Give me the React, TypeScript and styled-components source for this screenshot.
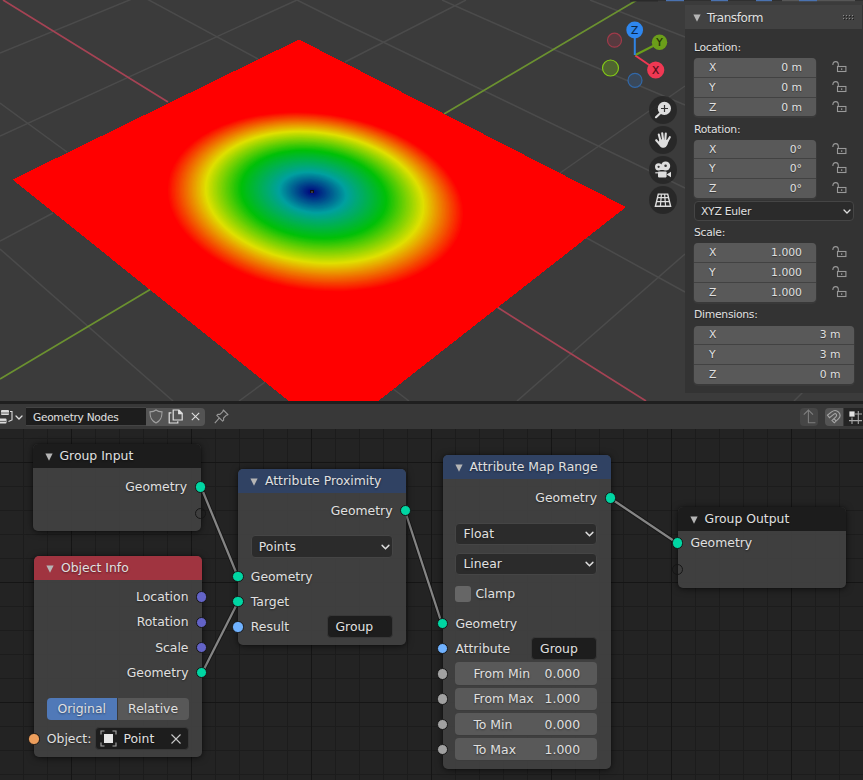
import React from "react";
import styled, { createGlobalStyle } from "styled-components";

const GlobalStyle = createGlobalStyle`
  * { box-sizing: border-box; }
  html, body { margin: 0; padding: 0; background: #232323; overflow: hidden; }
  body { font-family: "DejaVu Sans", sans-serif; color: #e0e0e0; }
  svg { display: block; flex: none; }
`;

const Shell = styled.div`
  width: 863px;
  height: 780px;
  display: flex;
  flex-direction: column;
  overflow: hidden;
  background: #1f1f1f;
`;

/* ---------- 3D viewport ---------- */

const Viewport = styled.section`
  position: relative;
  height: 401px;
  flex: none;
  display: flex;
  justify-content: flex-end;
  overflow: hidden;
  background: #3b3b3b;
`;

const Scene = styled.svg`
  position: absolute;
  left: 0;
  top: 0;
`;

const NavTools = styled.div`
  position: absolute;
  left: 649px;
  top: 95.6px;
  display: flex;
  flex-direction: column;
  gap: 2px;
`;

const NavButton = styled.div`
  width: 28px;
  height: 28.2px;
  border-radius: 50%;
  background: rgba(38, 38, 38, 0.85);
  display: flex;
  align-items: center;
  justify-content: center;
`;

const stops: [number, number[]][] = [
  [0, [0, 0, 124]],
  [0.23, [0, 160, 160]],
  [0.49, [0, 192, 8]],
  [0.735, [224, 224, 0]],
  [1, [255, 0, 0]],
];

function rampColor(t: number) {
  for (let i = 1; i < stops.length; i++) {
    const [t1, b] = stops[i];
    if (t <= t1) {
      const [t0, a] = stops[i - 1];
      const k = (t - t0) / (t1 - t0);
      return `rgb(${a.map((v, j) => Math.round(v + (b[j] - v) * k)).join(",")})`;
    }
  }
  return "rgb(255,0,0)";
}

const RINGS = 110;
const rings = Array.from({ length: RINGS }, (_, i) => 1 - i / RINGS);

const gridLines = [
  "M0 53L132 -1", "M0 136L297 0", "M0 103L67 152", "M147 -1L258 59",
  "M297 0L345 24L383 42L685 188", "M442 0L555 50L685 105", "M590 0L685 37",
  "M466 0L345 62", "M685 86L560 173", "M685 254L517 401", "M585 237L685 292",
  "M0 241L53 213", "M0 249L173 401", "M239 401L265 382", "M392 388L409 401",
  "M794 401L803 392",
];

const sheet = "299,39.5 626,207 377,402 290,402 12.5,179.5";

function SceneDrawing() {
  return (
    <Scene width="863" height="401" viewBox="0 0 863 401">
      <g fill="none" stroke="#4b4b4b" strokeWidth="1.5">
        {gridLines.map((d) => <path key={d} d={d} />)}
      </g>
      <g fill="none" strokeWidth="1.7">
        <path d="M3 0L168 102M497 307L646 401" stroke="#a54354" />
        <path d="M0 379L151 289M444 114L637 0" stroke="#6b9130" />
      </g>
      <polygon points={sheet} fill="#ff0000" shapeRendering="crispEdges" />
      {rings.map((t) => (
        <circle
          key={t}
          r="1"
          fill={rampColor(t)}
          transform={`matrix(${149 * t} ${12.1 * t} 0 ${89.5 * t} ${312 + 3.5 * t} ${192 + 10 * t * t})`}
        />
      ))}
      <rect x="310" y="190" width="4" height="3" fill="#101010" />
      <rect x="311" y="191" width="2" height="2" fill="#3b3b3b" />
      <g>
        <rect x="630" y="0" width="28" height="1.5" fill="#2a2a2a" />
        <rect x="658" y="0" width="205" height="1" fill="#303030" />
        <rect x="666" y="0" width="18" height="1.2" fill="#4a72b0" />
        <rect x="711" y="0" width="17" height="1.2" fill="#4a72b0" />
        <rect x="756" y="0" width="16" height="1.2" fill="#4a72b0" />
        <rect x="782" y="0" width="73" height="1.2" fill="#565656" />
        <rect x="799" y="0" width="18" height="1.2" fill="#4a72b0" />
      </g>
      <g strokeWidth="2" fill="none">
        <path d="M635.3 55.5L655 69" stroke="#ef3752" />
        <path d="M635.3 55L659 43" stroke="#6b9e1a" />
        <path d="M634.8 55V32" stroke="#2f83e3" />
      </g>
      <circle cx="614.5" cy="40.2" r="7" fill="#573a3f" stroke="#a03a4a" strokeWidth="1.2" />
      <circle cx="635" cy="80.3" r="7" fill="#39485a" stroke="#3268a8" strokeWidth="1.2" />
      <circle cx="610.5" cy="68" r="8" fill="#4f6530" stroke="#83c916" strokeWidth="1.2" />
      <circle cx="659.5" cy="42.3" r="7.7" fill="#6b9e1a" />
      <circle cx="634.7" cy="30" r="8.4" fill="#2e87ef" />
      <circle cx="655.7" cy="70" r="8.6" fill="#f03853" />
      <g fontFamily="DejaVu Sans" fontSize="10.5" textAnchor="middle" strokeWidth="0.2">
        <text x="634.7" y="34" fill="#0b2645" stroke="#0b2645">Z</text>
        <text x="659.5" y="46" fill="#1e3005" stroke="#1e3005">Y</text>
        <text x="655.7" y="74" fill="#4b0d17" stroke="#4b0d17">X</text>
      </g>
    </Scene>
  );
}

const ZoomIcon = () => (
  <svg width="18" height="18" viewBox="0 0 18 18">
    <path d="M2 16.2L7 11.5" stroke="#dedede" strokeWidth="2.2" strokeLinecap="round" />
    <circle cx="10.4" cy="7.4" r="6.6" fill="#dedede" />
    <path d="M10.5 4v7M7 7.5h7" stroke="#333" strokeWidth="1.2" />
  </svg>
);

const HandIcon = () => (
  <svg width="18" height="18" viewBox="0 0 18 18">
    <g stroke="#dedede" strokeLinecap="round" strokeWidth="2.1" fill="none">
      <path d="M6.3 9L4.8 3.6M9 8.5L8.2 2.2M11.3 8.5L11.8 2.6M13.6 10L15.8 6.2M5 12.4L2.2 9.2" />
    </g>
    <path d="M5.4 8.3L14.6 9C14.3 12 13 16.8 9.6 16.8C6.6 16.8 5 14 3.4 11.4L5 10.6Z" fill="#dedede" />
  </svg>
);

const CameraIcon = () => (
  <svg width="18" height="18" viewBox="0 0 18 18">
    <circle cx="4.6" cy="5.8" r="3.6" fill="#dedede" />
    <circle cx="11.6" cy="5" r="4.6" fill="#dedede" />
    <path d="M4.6 5h8v4h-8z" fill="#dedede" />
    <circle cx="4.6" cy="5.8" r="1.1" fill="#333" />
    <circle cx="11.6" cy="4.8" r="1.3" fill="#333" />
    <rect x="4" y="10.4" width="8.6" height="6" rx="0.8" fill="#dedede" />
    <path d="M12.6 13.4L17 10.8V16.2Z" fill="#dedede" />
    <path d="M1.3 11.8h3" stroke="#dedede" strokeWidth="1.2" />
  </svg>
);

const GridIcon = () => (
  <svg width="18" height="18" viewBox="0 0 18 18" fill="none" stroke="#dedede" strokeWidth="1.2">
    <path d="M4.3 3.1H13.7L16.6 15.3H1.4Z" strokeWidth="1.4" />
    <path d="M3.5 6.6H14.5M2.6 10.6H15.4M7.4 3.1L6.4 15.3M10.6 3.1L11.6 15.3" />
  </svg>
);

/* ---------- transform sidebar ---------- */

const Sidebar = styled.aside`
  position: relative;
  width: 178px;
  height: 388px;
  margin-top: 5px;
  padding-right: 1px;
  background: #333333;
  display: flex;
  flex-direction: column;
  font-size: 10.8px;
  letter-spacing: -0.28px;
  text-shadow: 0 1px 1px rgba(0, 0, 0, 0.4);
`;

const PanelHeader = styled.div`
  height: 24px;
  padding: 1px 7px 0 8px;
  background: #424242;
  display: flex;
  align-items: center;
  gap: 6px;
  font-size: 12px;
  letter-spacing: -0.4px;
  svg:last-child { margin-left: auto; }
`;

const PanelLabel = styled.div<{ $top?: number }>`
  height: 19px;
  margin-top: ${(p) => p.$top ?? 3.4}px;
  padding-left: 9px;
  line-height: 20px;
`;

const FieldLine = styled.div<{ $top?: number }>`
  display: flex;
  align-items: flex-start;
  margin: ${(p) => p.$top ?? 1}px 8px 0 9px;
`;

const FieldStack = styled.div<{ $wide?: boolean }>`
  width: ${(p) => (p.$wide ? 160.5 : 121.5)}px;
  display: flex;
  flex-direction: column;
  gap: 1px;
  background: #424242;
  border-radius: 4px;
  overflow: hidden;
  box-shadow: 0 1px 0 1px rgba(60, 60, 60, 0.7);
`;

const StackedField = styled.div`
  height: 18.7px;
  padding: 0 13.5px 0 15px;
  display: flex;
  align-items: center;
  justify-content: space-between;
  background: #595959;
`;

const Value = styled.span`
  letter-spacing: 0;
`;

const LockColumn = styled.div`
  height: 58.1px;
  margin-left: 16.5px;
  padding-top: 1.8px;
  display: flex;
  flex-direction: column;
  svg { margin-bottom: 5.9px; }
`;

const Select = styled.div<{ $size: number; $pad?: number }>`
  height: ${(p) => p.$size}px;
  padding: 0 2px 0 ${(p) => p.$pad ?? 7}px;
  flex: 1;
  display: flex;
  align-items: center;
  justify-content: space-between;
  border: 1px solid #454545;
  border-radius: 4px;
  background: #2b2b2b;
`;

const Chevron = ({ s = 8 }: { s?: number }) => (
  <svg width={s} height={s} viewBox="0 0 8 8" fill="none" stroke="#dcdcdc" strokeWidth="1.3" strokeLinecap="round">
    <path d="M1 3L4 6L7 3" />
  </svg>
);

const Disclosure = ({ color = "#b5b5b5" }: { color?: string }) => (
  <svg width="8" height="8" viewBox="0 0 8 8"><path d="M0.4 0.6H7.6L4 7.8Z" fill={color} /></svg>
);

const LockIcon = () => (
  <svg width="15" height="14" viewBox="0 0 15 14" fill="none" stroke="#999" strokeWidth="1.1">
    <path d="M0.9 5V4C1.4 1 6 0.6 6.3 4V6.5" />
    <rect x="5.5" y="6.5" width="8.4" height="5" />
    <path d="M9.7 8.2v1.8" />
  </svg>
);

const DragDots = () => (
  <svg width="12" height="6" viewBox="0 0 12 6">
    {[0, 3, 6, 9].map((x) => [0, 3].map((y) => (
      <g key={`${x}-${y}`}>
        <rect x={x + 1} y={y + 1} width="1" height="1" fill="#1c1c1c" />
        <rect x={x} y={y} width="1" height="1" fill="#8a8a8a" />
      </g>
    )))}
  </svg>
);

function Vector({ values, wide, top }: { values: string[]; wide?: boolean; top?: number }) {
  return (
    <FieldLine $top={top}>
      <FieldStack $wide={wide}>
        {values.map((v, i) => (
          <StackedField key={i}><span>{"XYZ"[i]}</span><Value>{v}</Value></StackedField>
        ))}
      </FieldStack>
      {!wide && <LockColumn><LockIcon /><LockIcon /><LockIcon /></LockColumn>}
    </FieldLine>
  );
}

/* ---------- node editor header ---------- */

const EditorBar = styled.header`
  height: 25px;
  margin-top: 3px;
  flex: none;
  display: flex;
  align-items: center;
  background: #383838;
  font-size: 10.6px;
  letter-spacing: -0.28px;
`;

const TypePicker = styled.div`
  width: 26px;
  display: flex;
  align-items: center;
  gap: 2px;
`;

const NameField = styled.div`
  width: 119.5px;
  height: 19px;
  padding-left: 7px;
  line-height: 18px;
  background: #1d1d1d;
  border: 1px solid #444;
  border-width: 1px 0;
`;

const BarButton = styled.div<{ $w: number; $round?: string; $tone?: string; $ml?: number }>`
  width: ${(p) => p.$w}px;
  height: 18px;
  margin-left: ${(p) => p.$ml ?? 0.5}px;
  display: flex;
  align-items: center;
  justify-content: center;
  background: ${(p) => p.$tone ?? "#545454"};
  border-radius: ${(p) => p.$round ?? "0"};
`;

const BarSpacer = styled.div`
  flex: 1;
`;

/* ---------- node editor canvas ---------- */

const Canvas = styled.main`
  position: relative;
  flex: 1;
  overflow: hidden;
  background-color: #232323;
  background-image:
    linear-gradient(90deg, #151515 1px, transparent 1px),
    linear-gradient(#151515 1px, transparent 1px),
    linear-gradient(90deg, #1c1c1c 1px, transparent 1px),
    linear-gradient(#1c1c1c 1px, transparent 1px);
  background-size: 120px 120px, 120px 120px, 24px 24px, 24px 24px;
  background-position: 71px 0, 0 33px, 23px 0, 0 9px;
`;

const Links = styled.svg`
  position: absolute;
  left: 0;
  top: 0;
`;

const NodeBox = styled.article<{ $x: number; $y: number; $h: number }>`
  position: absolute;
  left: ${(p) => p.$x}px;
  top: ${(p) => p.$y - 429}px;
  width: 168px;
  height: ${(p) => p.$h}px;
  border-radius: 5px;
  background: rgba(67, 67, 67, 0.9);
  box-shadow: 0 1px 7px rgba(0, 0, 0, 0.6), 0 0 1px rgba(0, 0, 0, 0.6);
  font-size: 12.4px;
  text-shadow: 0 1px 2px rgba(0, 0, 0, 0.45);
`;

const NodeHeader = styled.div<{ $color: string; $gap: number }>`
  height: 24px;
  padding: 0 0 1px 12px;
  display: flex;
  align-items: center;
  gap: ${(p) => p.$gap}px;
  border-radius: 5px 5px 0 0;
  background: ${(p) => p.$color};
  white-space: nowrap;
  svg { margin-top: 3px; }
`;

const NodeRow = styled.div<{ $h?: number; $mt?: number; $align?: string }>`
  position: relative;
  height: ${(p) => p.$h ?? 25.2}px;
  margin-top: ${(p) => p.$mt ?? 0}px;
  padding: 0 13.5px 0 12.8px;
  display: flex;
  align-items: center;
  justify-content: ${(p) => p.$align ?? "space-between"};
`;

const Socket = styled.i<{ $color: string; $right?: boolean }>`
  position: absolute;
  top: calc(50% - 5.4px);
  ${(p) => (p.$right ? "right: -5.4px" : "left: -5.7px")};
  width: 11.4px;
  height: 11.4px;
  border-radius: 50%;
  background: ${(p) => p.$color};
  border: 1px solid #161616;
`;

const TextField = styled.div<{ $w: number }>`
  width: ${(p) => p.$w}px;
  height: 22.6px;
  padding: 0 8px;
  display: flex;
  align-items: center;
  border-radius: 4px;
  border: 1px solid #383838;
  background: #1d1d1d;
`;

const ObjectField = styled(TextField)`
  padding: 0 6.5px 0 4px;
  gap: 7px;
  svg:last-child { margin-left: auto; }
`;

const NumberField = styled.div`
  flex: 1;
  height: 22.4px;
  padding: 0 17px 0 18px;
  display: flex;
  align-items: center;
  justify-content: space-between;
  border-radius: 4px;
  background: #595959;
  box-shadow: 0 1px 0 rgba(60, 60, 60, 0.8);
`;

const Toggle = styled.div<{ $on?: boolean }>`
  width: ${(p) => (p.$on ? 70 : 72)}px;
  height: 22.3px;
  display: flex;
  align-items: center;
  justify-content: center;
  background: ${(p) => (p.$on ? "#5079b8" : "#585858")};
  border-radius: ${(p) => (p.$on ? "4px 0 0 4px" : "0 4px 4px 0")};
  border-left: ${(p) => (p.$on ? "0" : "1px solid #3a3a3a")};
`;

const Check = styled.i`
  width: 16px;
  height: 16px;
  margin-right: 4px;
  border-radius: 3px;
  background: #666;
`;

const GEO = "#00d6a3";
const VEC = "#6363c7";
const STR = "#70b2ff";
const NUM = "#a1a1a1";
const OBJ = "#ed9e5c";

const Output = ({ label, color = GEO, mt }: { label: string; color?: string; mt?: number }) => (
  <NodeRow $align="flex-end" $mt={mt}>{label}<Socket $color={color} $right /></NodeRow>
);

const Input = ({ label, color = GEO, mt, field }: { label: string; color?: string; mt?: number; field?: string }) => (
  <NodeRow $mt={mt}>
    <span>{label}</span>
    <Socket $color={color} />
    {field && <TextField $w={66}>{field}</TextField>}
  </NodeRow>
);

const NumberInput = ({ label, value }: { label: string; value: string }) => (
  <NodeRow>
    <NumberField><span>{label}</span><span>{value}</span></NumberField>
    <Socket $color={NUM} />
  </NodeRow>
);

function Node({ title, color, x, y, h, gap = 7, children }: {
  title: string; color: string; x: number; y: number; h: number; gap?: number; children: React.ReactNode;
}) {
  return (
    <NodeBox $x={x} $y={y} $h={h}>
      <NodeHeader $color={color} $gap={gap}><Disclosure />{title}</NodeHeader>
      {children}
    </NodeBox>
  );
}

const links = ["M201 58L238 148", "M202 244L238 173", "M405 82L442 195", "M610 69L677 114"];

export default function App() {
  return (
    <Shell>
      <GlobalStyle />
      <Viewport>
        <SceneDrawing />
        <NavTools>
          <NavButton><ZoomIcon /></NavButton>
          <NavButton><HandIcon /></NavButton>
          <NavButton><CameraIcon /></NavButton>
          <NavButton><GridIcon /></NavButton>
        </NavTools>
        <Sidebar>
          <PanelHeader><Disclosure /><span>Transform</span><DragDots /></PanelHeader>
          <PanelLabel $top={8.6}>Location:</PanelLabel>
          <Vector values={["0 m", "0 m", "0 m"]} top={1.7} />
          <PanelLabel>Rotation:</PanelLabel>
          <Vector values={["0°", "0°", "0°"]} />
          <FieldLine $top={3.4}><Select $size={19.5} $pad={6}>XYZ Euler<Chevron /></Select></FieldLine>
          <PanelLabel $top={2.5}>Scale:</PanelLabel>
          <Vector values={["1.000", "1.000", "1.000"]} top={1.2} />
          <PanelLabel $top={3.8}>Dimensions:</PanelLabel>
          <Vector wide values={["3 m", "3 m", "0 m"]} top={1.2} />
        </Sidebar>
      </Viewport>

      <EditorBar>
        <TypePicker>
          <svg width="13" height="16" viewBox="0 0 13 16">
            <rect x="1" y="1" width="8" height="5" rx="1" fill="#dcdcdc" />
            <rect x="-1" y="9.5" width="7.5" height="5" rx="1" fill="#dcdcdc" />
            <path d="M1 4h8M-1 12.4h7" stroke="#444" strokeWidth="0.8" />
            <path d="M10 2.5h2v8.5L8.5 12.5" fill="none" stroke="#dcdcdc" strokeWidth="1.1" />
          </svg>
          <Chevron />
        </TypePicker>
        <NameField>Geometry Nodes</NameField>
        <BarButton $w={19.5}>
          <svg width="14" height="15" viewBox="0 0 14 15" fill="none" stroke="#a0a0a0" strokeWidth="1.1">
            <path d="M7 1C5.4 2.5 3 2.9 1 2.9C1 7 1.3 11.5 7 13.9C12.7 11.5 13 7 13 2.9C11 2.9 8.6 2.5 7 1Z" />
          </svg>
        </BarButton>
        <BarButton $w={19.5}>
          <svg width="16" height="15" viewBox="0 0 16 15" fill="none" stroke="#e0e0e0" strokeWidth="1.2">
            <path d="M5.2 1H11L14.2 4.2V11H5.2Z" />
            <path d="M10.7 1V4.6H14.2" fill="#e0e0e0" />
            <path d="M3.4 3.8H1.2V14H9.8V12.2" />
          </svg>
        </BarButton>
        <BarButton $w={19} $round="0 4px 4px 0">
          <svg width="9" height="9" viewBox="0 0 9 9" stroke="#e0e0e0" strokeWidth="1.1"><path d="M0.8 0.8L8.2 8.2M8.2 0.8L0.8 8.2" /></svg>
        </BarButton>
        <BarButton $w={20} $tone="transparent" $ml={6}>
          <svg width="15" height="15" viewBox="0 0 15 15" fill="none" stroke="#999" strokeWidth="1.1" strokeLinejoin="round">
            <path d="M9.3 1L14 5.7L12.4 6.2L9.6 9V11.2L8.6 12.2L2.8 6.4L3.8 5.4H6L8.8 2.6ZM5.2 9.2L0.8 14.2" />
          </svg>
        </BarButton>
        <BarSpacer />
        <BarButton $w={18} $round="4px" $tone="#464646">
          <svg width="13" height="15" viewBox="0 0 13 15" fill="none" stroke="#7e7e7e" strokeWidth="1.1">
            <path d="M0.8 5.6L5.4 1L10 5.6M5.4 1V13.8H12.4" />
          </svg>
        </BarButton>
        <BarButton $w={18} $round="4px 0 0 4px" $ml={7}>
          <svg width="16" height="16" viewBox="0 0 16 16" fill="none" stroke="#a5a5a5" strokeWidth="1.1">
            <path d="M1.4 6.2L5.6 2.9C10.8 -1 16.8 5.4 12.4 9.8L8.3 13.8L6 11.5L9.8 7.8C11.6 5.9 9.8 3.9 8 5.1L3.5 8.7Z" />
            <path d="M7.8 9.7L10.2 12" />
          </svg>
        </BarButton>
        <BarButton $w={19} $tone="#242424" $ml={1}>
          <svg width="17" height="16" viewBox="0 0 17 16">
            <path d="M4 11.6H17M7 8.5V15M13.3 2V15M10 5H17" stroke="#a8a8a8" strokeWidth="1.1" fill="none" />
            <rect x="4.4" y="2.4" width="5.2" height="5.2" fill="#e4e4e4" />
          </svg>
        </BarButton>
      </EditorBar>

      <Canvas>
        <Links width="863" height="351" viewBox="0 0 863 351" fill="none">
          {links.map((d) => (
            <g key={d}>
              <path d={d} stroke="#151515" strokeWidth="4" />
              <path d={d} stroke="#858585" strokeWidth="2.3" />
            </g>
          ))}
        </Links>

        <Node title="Group Input" color="#1c1c1c" x={32.5} y={444} h={87.3}>
          <Output label="Geometry" mt={6} />
          <Output label="" color="transparent" mt={1.5} />
        </Node>

        <Node title="Object Info" color="#a03440" x={34} y={556} h={200.7}>
          <Output label="Location" color={VEC} mt={4.2} />
          <Output label="Rotation" color={VEC} />
          <Output label="Scale" color={VEC} />
          <Output label="Geometry" />
          <NodeRow $h={22.3} $mt={12.6}>
            <Toggle $on>Original</Toggle><Toggle>Relative</Toggle>
          </NodeRow>
          <NodeRow $h={22.6} $mt={7.4}>
            <span>Object:</span>
            <Socket $color={OBJ} />
            <ObjectField $w={94}>
              <svg width="17" height="17" viewBox="0 0 17 17" fill="none" stroke="#a8a8a8" strokeWidth="1.1">
                <path d="M4.5 1H1V4.5M12.5 1H16V4.5M1 12.5V16H4.5M16 12.5V16H12.5" />
                <rect x="4" y="4" width="9" height="9" fill="#e6e6e6" stroke="none" />
              </svg>
              <span>Point</span>
              <svg width="10" height="10" viewBox="0 0 10 10" stroke="#c8c8c8" strokeWidth="1.1"><path d="M0.5 0.5L9.5 9.5M9.5 0.5L0.5 9.5" /></svg>
            </ObjectField>
          </NodeRow>
        </Node>

        <Node title="Attribute Proximity" color="#304263" x={238} y={469} h={176}>
          <Output label="Geometry" mt={4.8} />
          <NodeRow $h={22.6} $mt={12.4}><Select $size={22.6}>Points<Chevron s={9} /></Select></NodeRow>
          <Input label="Geometry" mt={5.6} />
          <Input label="Target" />
          <Input label="Result" color={STR} field="Group" />
        </Node>

        <Node title="Attribute Map Range" color="#304263" x={442.6} y={455.4} h={314}>
          <Output label="Geometry" mt={5.6} />
          <NodeRow $h={22.4} $mt={12.4}><Select $size={22.4}>Float<Chevron s={9} /></Select></NodeRow>
          <NodeRow $h={22.4} $mt={7.6}><Select $size={22.4}>Linear<Chevron s={9} /></Select></NodeRow>
          <NodeRow $h={16} $mt={10.6} $align="flex-start"><Check />Clamp</NodeRow>
          <Input label="Geometry" mt={9.2} />
          <Input label="Attribute" color={STR} field="Group" />
          <NumberInput label="From Min" value="0.000" />
          <NumberInput label="From Max" value="1.000" />
          <NumberInput label="To Min" value="0.000" />
          <NumberInput label="To Max" value="1.000" />
        </Node>

        <Node title="Group Output" color="#1c1c1c" x={677.6} y={506.7} h={81}>
          <Input label="Geometry" mt={-0.6} />
          <Input label="" color="transparent" mt={1.6} />
        </Node>
      </Canvas>
    </Shell>
  );
}
